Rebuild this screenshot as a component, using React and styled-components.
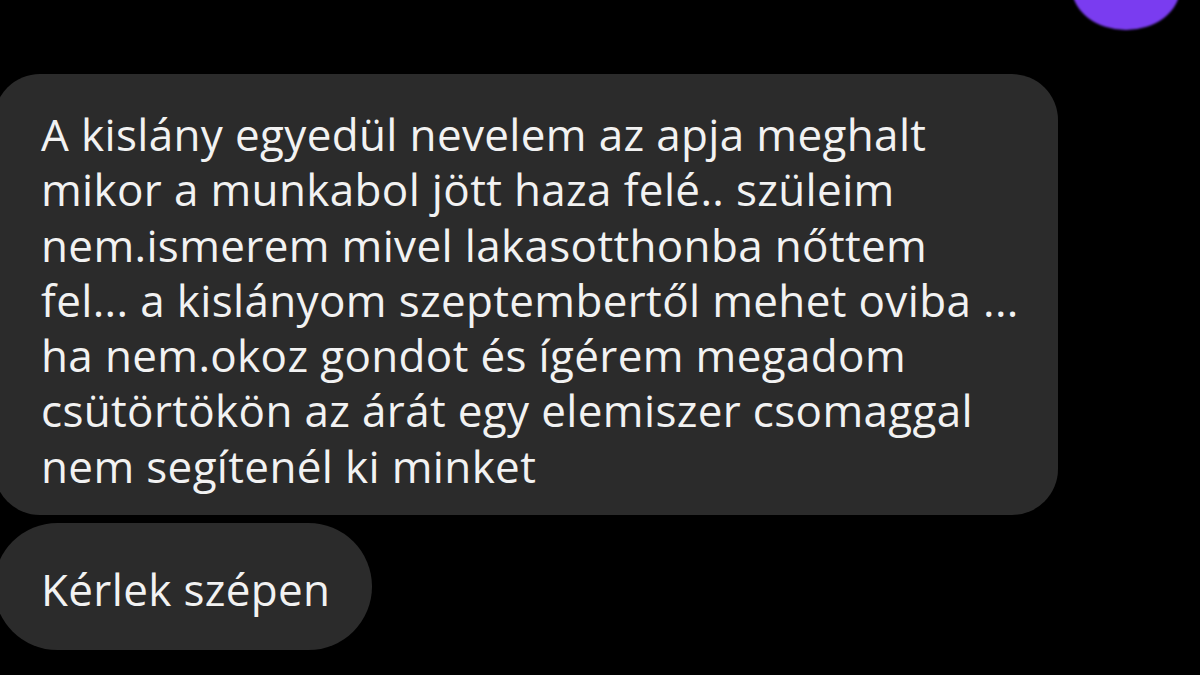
import React from 'react';
import styled, { createGlobalStyle } from 'styled-components';

const Global = createGlobalStyle`
  html, body {
    margin: 0;
    padding: 0;
    background: #000;
    overflow: hidden;
  }
`;

const Screen = styled.div`
  width: 1200px;
  height: 675px;
  background: #000;
  display: flex;
  flex-direction: column;
  overflow: hidden;
  font-family: "Open Sans", "Noto Sans", sans-serif;
`;

const SentTail = styled.div`
  align-self: flex-end;
  width: 108px;
  height: 84px;
  margin-top: -54px;
  margin-right: 20px;
  border-radius: 50%;
  background: #7a3cf0;
  filter: blur(1px);
`;

const Thread = styled.div`
  display: flex;
  flex-direction: column;
  align-items: flex-start;
  gap: 8px;
  margin-top: 44px;
  margin-left: -6px;
`;

const Bubble = styled.div`
  background: #2b2b2b;
  color: #f2f2f2;
  border-radius: ${p => p.$round ? '64px' : '46px'};
  width: ${p => p.$w}px;
  height: ${p => p.$h}px;
  box-sizing: border-box;
  padding: ${p => p.$pad};
  font-size: 44px;
  line-height: 55.3px;
  letter-spacing: 0.35px;
  white-space: pre;
`;

const lines = [
  'A kislány egyedül nevelem az apja meghalt',
  'mikor a munkabol jött haza felé.. szüleim',
  'nem.ismerem mivel lakasotthonba nőttem',
  'fel... a kislányom szeptembertől mehet oviba ...',
  'ha nem.okoz gondot és ígérem megadom',
  'csütörtökön az árát egy elemiszer csomaggal',
  'nem segítenél ki minket',
];

export default function App() {
  return (
    <Screen>
      <Global />
      <SentTail />
      <Thread>
        <Bubble $w={1064} $h={441} $pad="33px 0 0 47px">
          {lines.join('\n')}
        </Bubble>
        <Bubble $w={378} $h={127} $pad="39px 0 0 47px" $round>
          Kérlek szépen
        </Bubble>
      </Thread>
    </Screen>
  );
}
